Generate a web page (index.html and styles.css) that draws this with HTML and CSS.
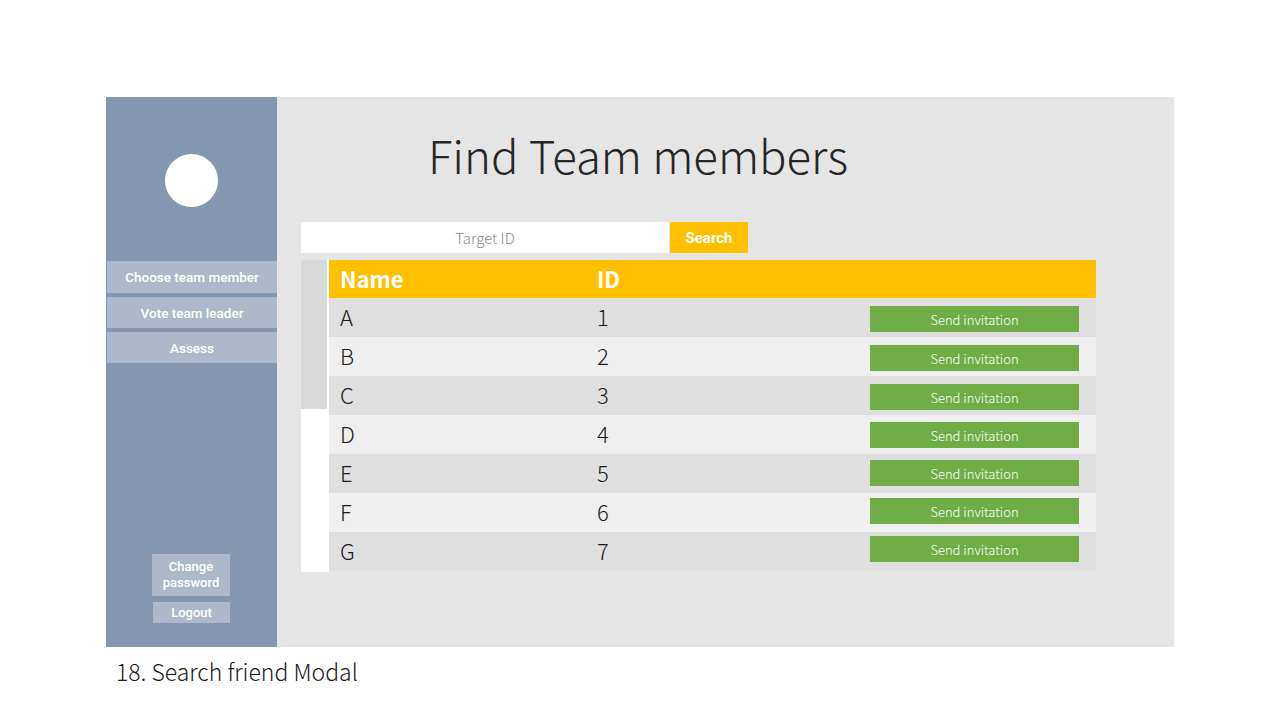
FILE: index.html
```html
<!DOCTYPE html>
<html lang="en">
<head>
<meta charset="utf-8">
<title>Find Team members</title>
<link rel="stylesheet" href="styles.css">
</head>
<body>
<div class="slide">
  <div class="frame">
    <aside class="sidebar">
      <div class="avatar"></div>
      <nav class="nav">
        <div class="nav-item first">Choose team member</div>
        <div class="nav-item">Vote team leader</div>
        <div class="nav-item">Assess</div>
      </nav>
      <div class="account">
        <div class="acc-btn change">Change<br>password</div>
        <div class="acc-btn logout">Logout</div>
      </div>
    </aside>
    <main class="main">
      <h1 class="title">Find Team members</h1>
      <div class="search">
        <div class="search-input">Target ID</div>
        <div class="search-btn">Search</div>
      </div>
      <div class="table-wrap">
        <div class="side-col"><div class="side-gray"></div></div>
        <div class="table">
          <div class="row head"><span class="c-name">Name</span><span class="c-id">ID</span></div>
          <div class="row odd"><span class="c-name">A</span><span class="c-id">1</span><span class="invite">Send invitation</span></div>
          <div class="row even"><span class="c-name">B</span><span class="c-id">2</span><span class="invite">Send invitation</span></div>
          <div class="row odd"><span class="c-name">C</span><span class="c-id">3</span><span class="invite">Send invitation</span></div>
          <div class="row even"><span class="c-name">D</span><span class="c-id">4</span><span class="invite">Send invitation</span></div>
          <div class="row odd"><span class="c-name">E</span><span class="c-id">5</span><span class="invite">Send invitation</span></div>
          <div class="row even"><span class="c-name">F</span><span class="c-id">6</span><span class="invite">Send invitation</span></div>
          <div class="row odd"><span class="c-name">G</span><span class="c-id">7</span><span class="invite">Send invitation</span></div>
        </div>
      </div>
    </main>
  </div>
  <p class="caption">18. Search friend Modal</p>
</div>
</body>
</html>
```

FILE: styles.css
```css
* { box-sizing: border-box; }
html, body { margin: 0; padding: 0; background: #ffffff; }
body {
  width: 1280px;
  height: 720px;
  overflow: hidden;
  font-family: "Noto Sans CJK SC", "Noto Sans", sans-serif;
  color: #222;
}
.slide { padding: 97px 0 0 106px; }
.frame { display: flex; width: 1068px; height: 550px; }

.sidebar {
  width: 171px;
  background: #8497b0;
  display: flex;
  flex-direction: column;
  align-items: center;
}
.avatar {
  width: 53px; height: 53px; border-radius: 50%;
  background: #ffffff;
  margin-top: 57px;
}
.nav {
  margin-top: 54px;
  align-self: stretch;
  padding-left: 1px;
  display: flex; flex-direction: column; gap: 4px;
}
.nav-item {
  height: 31px;
  background: #adb9ca;
  color: #fff;
  font-family: Roboto, "Liberation Sans", sans-serif;
  font-weight: 500;
  font-size: 13.5px;
  display: flex; align-items: center; justify-content: center;
}
.nav-item.first { height: 32px; }
.account {
  margin-top: auto;
  margin-bottom: 24px;
  display: flex; flex-direction: column; align-items: center; gap: 6px;
  font-family: Roboto, "Liberation Sans", sans-serif;
  font-weight: 500;
  font-size: 13px;
  color: #fff;
}
.acc-btn { background: #adb9ca; text-align: center; }
.change { width: 78px; height: 42px; line-height: 16px; padding-top: 5px; margin-right: 1px; }
.logout { width: 77px; height: 21px; line-height: 21px; }

.main {
  flex: 1;
  background: #e6e5e5;
  padding: 0 0 0 24px;
}
.title {
  margin: 25px 0 0 127px;
  font-weight: 300;
  font-size: 45.6px;
  line-height: 64px;
  color: #262626;
  white-space: nowrap;
}
.search { display: flex; gap: 1px; margin-top: 36px; height: 31px; }
.search-input {
  width: 368px; background: #fff; color: #8a8a8a;
  font-size: 15px; font-weight: 300;
  display: flex; align-items: center; justify-content: center;
}
.search-btn {
  width: 78px; background: #ffc000; color: #fff;
  font-family: Roboto, "Liberation Sans", sans-serif;
  font-weight: 700; font-size: 15px;
  display: flex; align-items: center; justify-content: center;
}
.table-wrap { display: flex; margin-top: 7px; }
.side-col { width: 28px; background: #fff; height: 312px; }
.side-gray { width: 26px; height: 149px; background: #d9d9d9; }
.table { width: 767px; }
.row {
  height: 39px;
  display: flex; align-items: center;
  font-size: 22px; font-weight: 300; color: #1a1a1a;
  padding-bottom: 3px;
}
.row.head {
  height: 38px; background: #ffc000; color: #fff; font-weight: 700;
  padding-bottom: 2px;
}
.row.odd { background: #dfdfdf; }
.row.even { background: #efefef; }
.c-name { width: 268px; padding-left: 11px; }
.c-id { width: 263px; }
.invite {
  margin-left: 10px;
  width: 209px; height: 26px;
  background: #70ad47; color: #fff;
  font-size: 13px; font-weight: 300;
  display: flex; align-items: center; justify-content: center;
  align-self: flex-start;
  margin-top: 8px;
}
.row:nth-child(5) .invite { margin-top: 7px; }
.row:nth-child(6) .invite { margin-top: 6px; }
.row:nth-child(7) .invite { margin-top: 5px; }
.row:nth-child(8) .invite { margin-top: 4px; }
.caption {
  margin: 8px 0 0 10px;
  font-size: 23px; font-weight: 300; color: #1a1a1a;
  line-height: 32px;
}
```
